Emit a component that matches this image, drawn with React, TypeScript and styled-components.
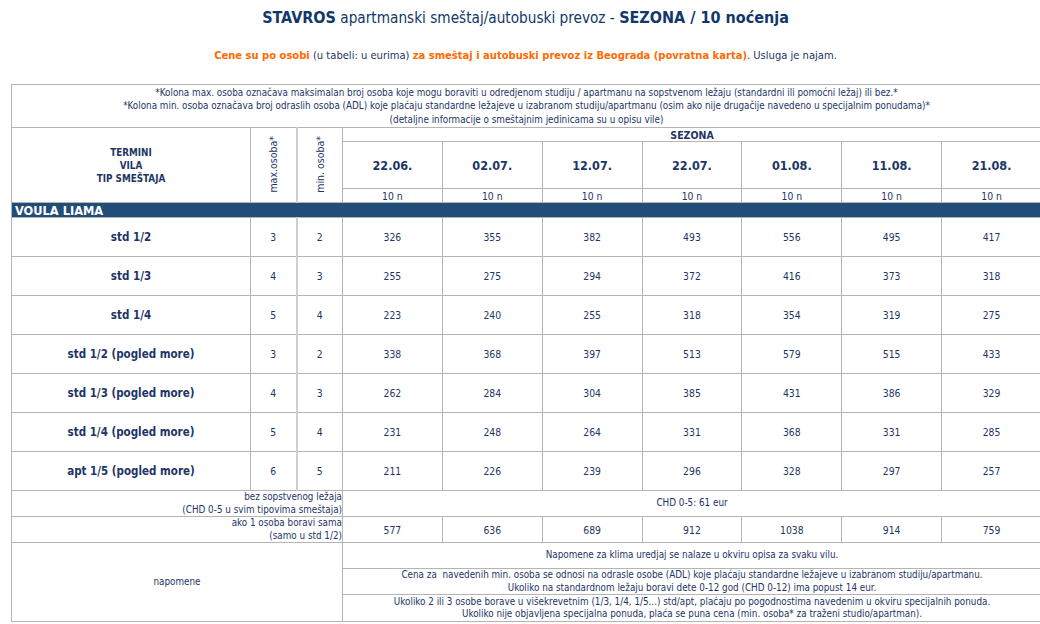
import React from 'react';
import styled, {createGlobalStyle} from 'styled-components';

const GlobalStyle = createGlobalStyle`
	html, body {
		margin: 0;
		padding: 0;
		background: #ffffff;
		overflow: hidden;
	}
	body {
		font-family: 'DejaVu Sans Condensed', 'DejaVu Sans', sans-serif;
		color: #1d3566;
	}
`;

const Page = styled.div`
	width: 1040px;
	padding: 0 0 0 11px;
	box-sizing: border-box;
`;
const Title = styled.h1`
	margin: 0;
	padding: 8px 0 0 0;
	height: 28px;
	text-align: center;
	font-size: 15.2px;
	font-weight: normal;
	color: #123769;
	b {
		font-size: 16px;
	}
`;
const Subtitle = styled.p`
	margin: 0;
	padding: 13px 0 0 0;
	height: 35px;
	text-align: center;
	font-size: 11.1px;
	color: #1d3566;
	b {
		color: #ff6a00;
	}
`;
const Table = styled.table`
	width: 1030px;
	table-layout: fixed;
	border-collapse: collapse;
	font-size: 9.8px;
	td {
		border: 1px solid #b4b4b4;
		padding: 0;
		text-align: center;
		vertical-align: middle;
	}
`;
const NoteCell = styled.td`
	height: 42px;
	line-height: 13.5px;
`;
const HeadCell = styled.td`
	font-weight: bold;
	line-height: 13px;
	font-size: 9.8px;
`;
const VerticalCell = styled.td<{double?: boolean}>`
	${(p) => (p.double ? 'border-left: 2px solid #cfcfcf !important;' : '')}
	span {
		display: inline-block;
		writing-mode: vertical-rl;
		transform: rotate(180deg);
		font-size: 10.5px;
	}
`;
const SeasonCell = styled.td`
	height: 13px;
	font-weight: bold;
	font-size: 10.5px;
	line-height: 12px;
`;
const DateCell = styled.td`
	height: 46px;
	font-weight: bold;
	font-size: 12.5px;
`;
const NightCell = styled.td`
	height: 13px;
	line-height: 12px;
	font-size: 10.3px;
`;
const VillaBar = styled.td`
	height: 14px;
	background: #214e78;
	color: #ffffff;
	font-weight: bold;
	font-size: 12.7px;
	line-height: 13px;
	text-align: left !important;
	padding-left: 3px !important;
`;
const TypeCell = styled.td`
	height: 38px;
	font-weight: bold;
	font-size: 11.5px;
`;
const NumCell = styled.td<{double?: boolean}>`
	font-size: 10.3px;
	${(p) => (p.double ? 'border-left: 2px solid #cfcfcf !important;' : '')}
`;
const LabelCell = styled.td`
	height: 25px;
	text-align: right !important;
	line-height: 12.5px;
`;
const InfoCell = styled.td<{h: number}>`
	height: ${(p) => p.h}px;
	line-height: 12.5px;
`;

const dates = ['22.06.', '02.07.', '12.07.', '22.07.', '01.08.', '11.08.', '21.08.'];

const rows: {name: string; max: number; min: number; prices: number[]}[] = [
	{name: 'std 1/2', max: 3, min: 2, prices: [326, 355, 382, 493, 556, 495, 417]},
	{name: 'std 1/3', max: 4, min: 3, prices: [255, 275, 294, 372, 416, 373, 318]},
	{name: 'std 1/4', max: 5, min: 4, prices: [223, 240, 255, 318, 354, 319, 275]},
	{name: 'std 1/2 (pogled more)', max: 3, min: 2, prices: [338, 368, 397, 513, 579, 515, 433]},
	{name: 'std 1/3 (pogled more)', max: 4, min: 3, prices: [262, 284, 304, 385, 431, 386, 329]},
	{name: 'std 1/4 (pogled more)', max: 5, min: 4, prices: [231, 248, 264, 331, 368, 331, 285]},
	{name: 'apt 1/5 (pogled more)', max: 6, min: 5, prices: [211, 226, 239, 296, 328, 297, 257]},
];

const single = [577, 636, 689, 912, 1038, 914, 759];

function App() {
	return (
		<Page>
			<GlobalStyle />
			<Title>
				<b>STAVROS</b> apartmanski smeštaj/autobuski prevoz - <b>SEZONA / 10 noćenja</b>
			</Title>
			<Subtitle>
				<b>Cene su po osobi</b> (u tabeli: u eurima) <b>za smeštaj i autobuski prevoz iz Beograda (povratna karta)</b>. Usluga je najam.
			</Subtitle>
			<Table>
				<colgroup>
					<col style={{width: 239}} />
					<col style={{width: 46}} />
					<col style={{width: 46}} />
					{dates.map((d) => (
						<col key={d} style={{width: 99.85}} />
					))}
				</colgroup>
				<tbody>
					<tr>
						<NoteCell colSpan={10}>
							*Kolona max. osoba označava maksimalan broj osoba koje mogu boraviti u odredjenom studiju / apartmanu na sopstvenom ležaju (standardni ili pomoćni ležaj) ili bez.*
							<br />
							*Kolona min. osoba označava broj odraslih osoba (ADL) koje plaćaju standardne ležajeve u izabranom studiju/apartmanu (osim ako nije drugačije navedeno u specijalnim ponudama)*
							<br />
							(detaljne informacije o smeštajnim jedinicama su u opisu vile)
						</NoteCell>
					</tr>
					<tr>
						<HeadCell rowSpan={3}>
							TERMINI
							<br />
							VILA
							<br />
							TIP SMEŠTAJA
						</HeadCell>
						<VerticalCell rowSpan={3}>
							<span>max.osoba*</span>
						</VerticalCell>
						<VerticalCell rowSpan={3} double>
							<span>min. osoba*</span>
						</VerticalCell>
						<SeasonCell colSpan={7}>SEZONA</SeasonCell>
					</tr>
					<tr>
						{dates.map((d) => (
							<DateCell key={d}>{d}</DateCell>
						))}
					</tr>
					<tr>
						{dates.map((d) => (
							<NightCell key={d}>10 n</NightCell>
						))}
					</tr>
					<tr>
						<VillaBar colSpan={10}>VOULA LIAMA</VillaBar>
					</tr>
					{rows.map((r) => (
						<tr key={r.name}>
							<TypeCell>{r.name}</TypeCell>
							<NumCell>{r.max}</NumCell>
							<NumCell double>{r.min}</NumCell>
							{r.prices.map((p, i) => (
								<NumCell key={i}>{p}</NumCell>
							))}
						</tr>
					))}
					<tr>
						<LabelCell colSpan={3}>
							bez sopstvenog ležaja
							<br />
							(CHD 0-5 u svim tipovima smeštaja)
						</LabelCell>
						<InfoCell h={25} colSpan={7}>
							CHD 0-5: 61 eur
						</InfoCell>
					</tr>
					<tr>
						<LabelCell colSpan={3}>
							ako 1 osoba boravi sama
							<br />
							(samo u std 1/2)
						</LabelCell>
						{single.map((p, i) => (
							<NumCell key={i}>{p}</NumCell>
						))}
					</tr>
					<tr>
						<InfoCell h={25} colSpan={3} rowSpan={3}>
							napomene
						</InfoCell>
						<InfoCell h={25} colSpan={7}>
							Napomene za klima uredjaj se nalaze u okviru opisa za svaku vilu.
						</InfoCell>
					</tr>
					<tr>
						<InfoCell h={25} colSpan={7}>
							Cena za&nbsp; navedenih min. osoba se odnosi na odrasle osobe (ADL) koje plaćaju standardne ležajeve u izabranom studiju/apartmanu.
							<br />
							Ukoliko na standardnom ležaju boravi dete 0-12 god (CHD 0-12) ima popust 14 eur.
						</InfoCell>
					</tr>
					<tr>
						<InfoCell h={26} colSpan={7}>
							Ukoliko 2 ili 3 osobe borave u višekrevetnim (1/3, 1/4, 1/5...) std/apt, plaćaju po pogodnostima navedenim u okviru specijalnih ponuda.
							<br />
							Ukoliko nije objavljena specijalna ponuda, plaća se puna cena (min. osoba* za traženi studio/apartman).
						</InfoCell>
					</tr>
				</tbody>
			</Table>
		</Page>
	);
}

export default App;
